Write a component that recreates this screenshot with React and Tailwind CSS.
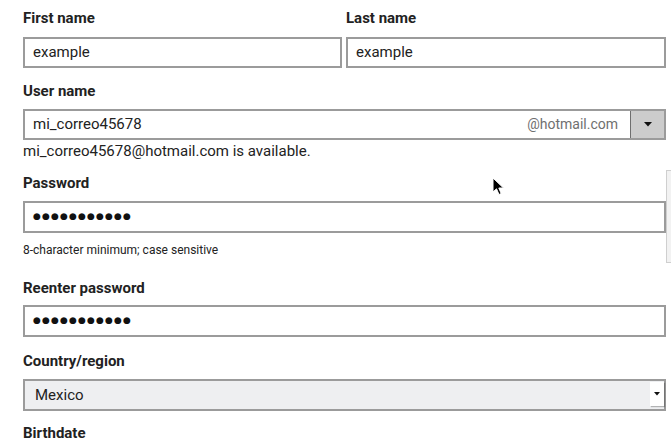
import React from "react";

const font = { fontFamily: "Roboto, 'Noto Sans', Arial, sans-serif" };

function Label({ children, className = "" }) {
  return (
    <div className={`h-[20px] leading-[20px] text-[15px] font-bold text-[#222] ${className}`}>
      {children}
    </div>
  );
}

function TextBox({ value, className = "" }) {
  return (
    <div className={`h-[31px] border-2 border-[#9b9b9b] bg-white flex items-center pl-[8px] text-[15px] text-[#222] ${className}`}>
      {value}
    </div>
  );
}

function Dots() {
  return (
    <span
      className="text-[9px] tracking-[1.15px] text-[#111]"
      style={{ fontFamily: "'DejaVu Sans', sans-serif" }}
    >
      ●●●●●●●●●●●
    </span>
  );
}

export default function App() {
  return (
    <div className="relative w-[671px] h-[440px] overflow-hidden bg-white" style={font}>
      <div className="w-[643px] ml-[23px] pt-[8px]">
        <div className="grid grid-cols-[319px_320px] gap-x-[4px]">
          <Label>First name</Label>
          <Label>Last name</Label>
          <TextBox value="example" className="mt-[9px]" />
          <TextBox value="example" className="mt-[9px]" />
        </div>

        <Label className="mt-[13px]">User name</Label>
        <div className="mt-[8px] h-[31px] border-2 border-[#9b9b9b] bg-white flex text-[15px]">
          <div className="flex-1 flex items-center justify-between pl-[8px] pr-[12px]">
            <span className="text-[#222]">mi_correo45678</span>
            <span className="text-[14px] text-[#6f6f6f]">@hotmail.com</span>
          </div>
          <div className="w-[34px] bg-[#cccccc] border-l border-[#6e6e6e] flex items-center justify-center">
            <svg width="8" height="5" viewBox="0 0 8 5">
              <polygon points="0,0 8,0 4,4.5" fill="#111" />
            </svg>
          </div>
        </div>
        <div className="mt-[1px] h-[20px] leading-[20px] text-[15px] text-[#222]">
          mi_correo45678@hotmail.com is available.
        </div>

        <Label className="mt-[12px]">Password</Label>
        <div className="mt-[8px] h-[32px] border-2 border-[#9b9b9b] bg-white flex items-center pl-[8px]">
          <Dots />
        </div>
        <div className="mt-[9px] h-[16px] leading-[16px] text-[12px] text-[#222]">
          8-character minimum; case sensitive
        </div>

        <Label className="mt-[20px]">Reenter password</Label>
        <div className="mt-[7px] h-[32px] border-2 border-[#9b9b9b] bg-white flex items-center pl-[8px]">
          <Dots />
        </div>

        <Label className="mt-[14px]">Country/region</Label>
        <div className="mt-[8px] h-[32px] border-2 border-[#9b9b9b] bg-[#eeeff1] flex items-stretch text-[15px] text-[#222]">
          <div className="flex-1 flex items-center pl-[10px]">Mexico</div>
          <div className="w-[14px] mt-[1px] mb-[3px] bg-white shadow-[1px_1px_1px_rgba(0,0,0,0.25)] flex items-center justify-center">
            <svg width="6" height="4" viewBox="0 0 6 4">
              <polygon points="0,0 6,0 3,3.5" fill="#111" />
            </svg>
          </div>
        </div>

        <Label className="mt-[12px]">Birthdate</Label>
      </div>

      <div className="absolute left-[666px] top-[170px] w-[10px] h-[93px] bg-[#f2f2f2] border border-[#cfcfcf]" />

      <svg
        className="absolute left-[492px] top-[177px]"
        width="14"
        height="20"
        viewBox="0 0 14 20"
      >
        <path
          d="M1 1 L1 15 L4.5 11.8 L7 17.5 L9.2 16.5 L6.8 11 L11.5 11 Z"
          fill="#000"
          stroke="#fff"
          strokeWidth="1"
          strokeLinejoin="round"
        />
      </svg>
    </div>
  );
}
